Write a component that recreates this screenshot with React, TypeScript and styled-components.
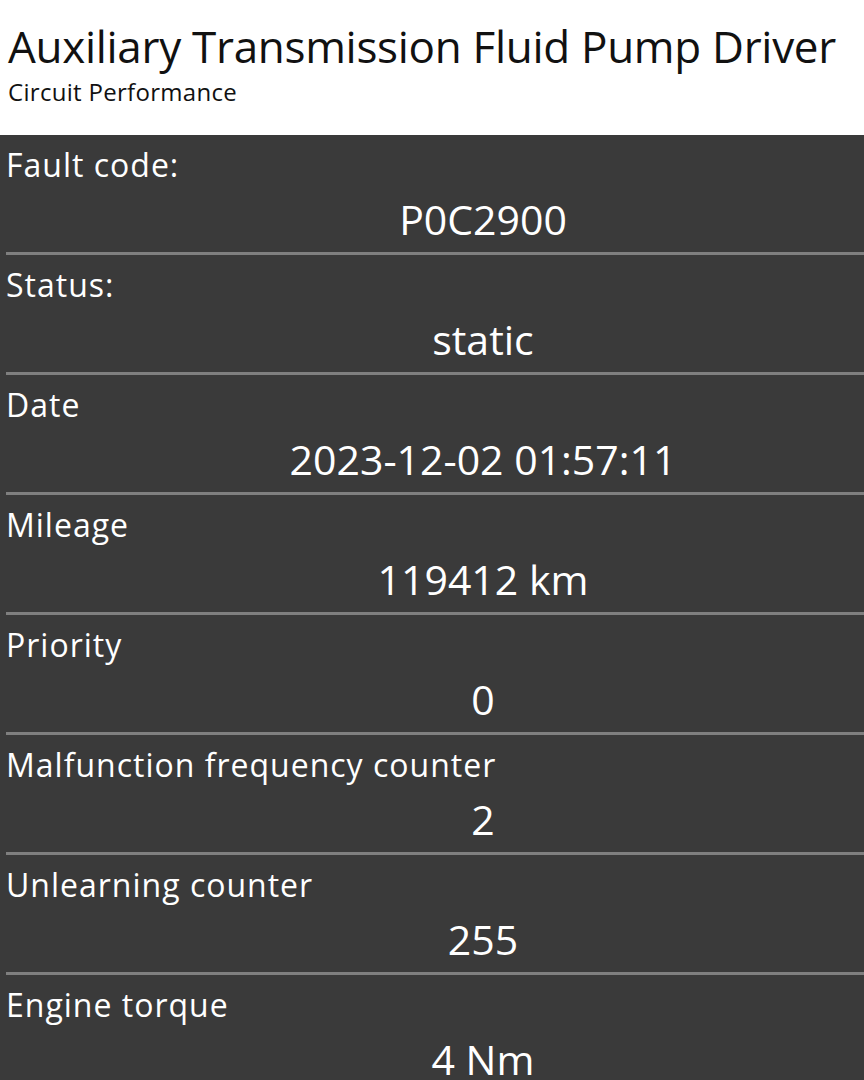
import styled, {createGlobalStyle} from "styled-components";

type FaultField = {
    label: string;
    value: string;
};

const fields: FaultField[] = [
    {label: "Fault code:", value: "P0C2900"},
    {label: "Status:", value: "static"},
    {label: "Date", value: "2023-12-02 01:57:11"},
    {label: "Mileage", value: "119412 km"},
    {label: "Priority", value: "0"},
    {label: "Malfunction frequency counter", value: "2"},
    {label: "Unlearning counter", value: "255"},
    {label: "Engine torque", value: "4 Nm"},
];

export default function App() {
    return (
        <>
            <GlobalStyle/>
            <Page>
                <Header>
                    <Title>Auxiliary Transmission Fluid Pump Driver</Title>
                    <Subtitle>Circuit Performance</Subtitle>
                </Header>
                <FieldList>
                    {fields.map((field, index) => (
                        <FieldRow key={field.label} $last={index === fields.length - 1}>
                            <FieldLabel>{field.label}</FieldLabel>
                            <FieldValue>{field.value}</FieldValue>
                        </FieldRow>
                    ))}
                </FieldList>
            </Page>
        </>
    )
}

const GlobalStyle = createGlobalStyle`
    html, body {
        margin: 0;
        padding: 0;
        background-color: #3a3a3a;
        font-family: "Open Sans", "Noto Sans", sans-serif;
    }
`;

const Page = styled.div`
    display: flex;
    flex-direction: column;
    width: 864px;
    height: 1080px;
    overflow: hidden;
    background-color: #3a3a3a;
`;

const Header = styled.header`
    background-color: #ffffff;
    height: 135px;
    flex-shrink: 0;
    box-sizing: border-box;
    padding: 20px 0 0 8px;
    display: flex;
    flex-direction: column;
`;

const Title = styled.h1`
    margin: 0;
    font-size: 44px;
    font-weight: 400;
    line-height: 52px;
    letter-spacing: -0.3px;
    color: #111111;
    white-space: nowrap;
`;

const Subtitle = styled.div`
    margin-top: 5px;
    font-size: 24px;
    line-height: 30px;
    letter-spacing: 0.3px;
    color: #111111;
`;

const FieldList = styled.div`
    display: flex;
    flex-direction: column;
    flex-shrink: 0;
`;

const FieldRow = styled.div<{ $last: boolean }>`
    display: flex;
    flex-direction: column;
    height: 120px;
    flex-shrink: 0;
    box-sizing: border-box;
    padding-top: 10px;
    margin-left: 6px;
    border-bottom: ${p => (p.$last ? "none" : "3px solid #7f7f7f")};
`;

const FieldLabel = styled.div`
    font-size: 32px;
    line-height: 40px;
    letter-spacing: 1px;
    color: #ffffff;
`;

const FieldValue = styled.div`
    margin-top: 6px;
    font-size: 41px;
    line-height: 56px;
    color: #ffffff;
    text-align: center;
    padding-left: 96px;
`;
